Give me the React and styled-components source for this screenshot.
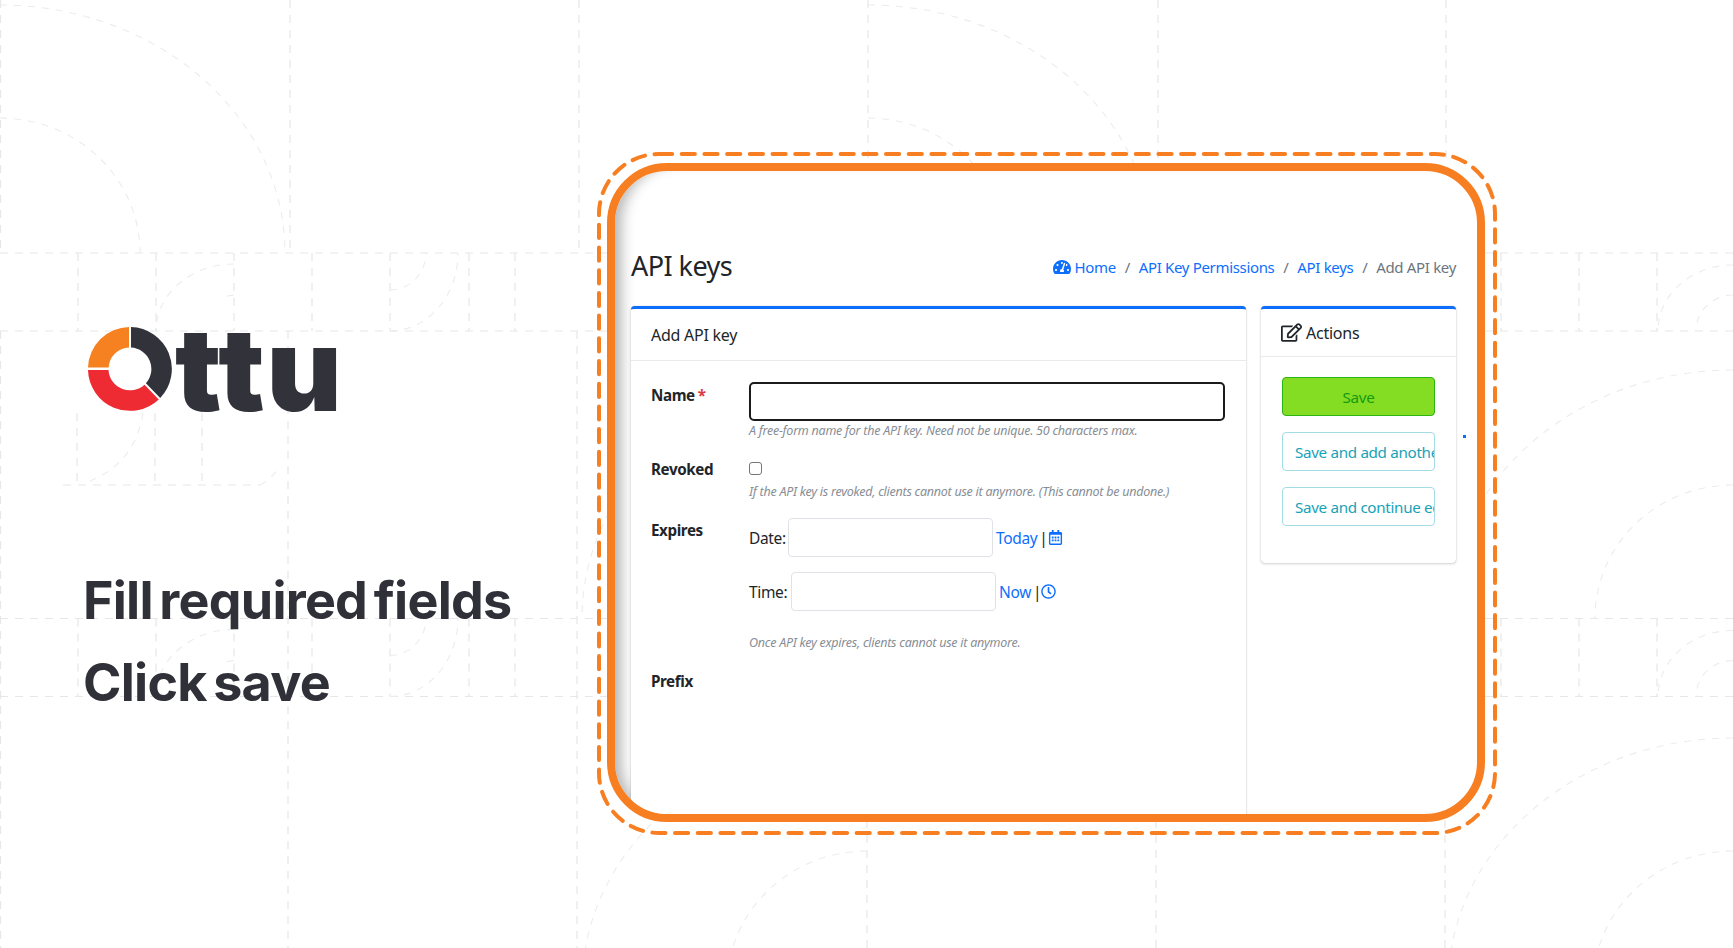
import React from 'react';
import styled, { createGlobalStyle } from 'styled-components';
import { FaTachometerAlt, FaRegEdit, FaRegCalendarAlt, FaRegClock } from 'react-icons/fa';

const GlobalStyle = createGlobalStyle`
	html, body {
		margin: 0;
		padding: 0;
		background: #fff;
	}
	* {
		box-sizing: border-box;
	}
`;

const Page = styled.div`
	position: relative;
	display: flex;
	width: 1733px;
	height: 948px;
	overflow: hidden;
	background: #fff;
	font-family: "Noto Sans", sans-serif;
`;

const Backdrop = styled.svg`
	position: absolute;
	left: 0;
	top: 0;
`;

const LeftColumn = styled.div`
	position: relative;
	flex: 0 0 607px;
	padding: 327px 0 0 88px;
`;

const Logo = styled.div`
	display: flex;
	align-items: flex-end;
	height: 84px;
	gap: 3px;
`;

const LogoText = styled.span`
	font-family: Inter, sans-serif;
	font-weight: 900;
	font-size: 116px;
	line-height: 84px;
	letter-spacing: 2px;
	color: #31323a;
`;

const Steps = styled.div`
	margin: 149px 0 0 -5px;
`;

const Step = styled.div`
	font-family: Inter, sans-serif;
	font-weight: 700;
	font-size: 52px;
	line-height: 81.5px;
	letter-spacing: -0.75px;
	word-spacing: -5px;
	color: #2f3038;
	white-space: nowrap;
`;

const FrameWrap = styled.div`
	position: relative;
	flex: 0 0 878px;
	height: 659px;
	margin-top: 163px;
`;

const DashedOutline = styled.svg`
	position: absolute;
	left: -10px;
	top: -11px;
	overflow: visible;
`;

const Frame = styled.div`
	position: relative;
	width: 100%;
	height: 100%;
	border: 8px solid #f77f22;
	border-radius: 60px;
	background: #fff;
	overflow: hidden;
	box-shadow: inset 16px 0 14px -10px rgba(0, 0, 0, 0.3);
	padding: 74px 21px 0 16px;
`;

const Dot = styled.span`
	position: absolute;
	left: 848px;
	top: 264px;
	width: 3px;
	height: 3px;
	background: #0d6efd;
`;

const HeaderRow = styled.div`
	display: flex;
	justify-content: space-between;
	align-items: center;
	height: 40px;
	margin-bottom: 21px;
`;

const Title = styled.h1`
	margin: 0;
	font-size: 27px;
	font-weight: 400;
	letter-spacing: -0.55px;
	color: #212529;
`;

const Breadcrumb = styled.nav`
	display: flex;
	align-items: center;
	gap: 8.8px;
	margin-top: 4px;
	font-size: 15px;
	letter-spacing: -0.33px;
	color: #6c757d;
`;

const Crumb = styled.a`
	display: inline-flex;
	align-items: center;
	gap: 3px;
	color: #0d6efd;
	text-decoration: none;
`;

const Columns = styled.div`
	display: flex;
	align-items: flex-start;
	gap: 15px;
`;

const Card = styled.section`
	flex: 0 0 ${(p) => p.$width}px;
	height: ${(p) => p.$height}px;
	background: #fff;
	border-top: 3px solid #0d6efd;
	border-radius: 4px;
	box-shadow: 0 0 1px rgba(0, 0, 0, 0.3), 0 1px 3px rgba(0, 0, 0, 0.16);
`;

const CardHeader = styled.div`
	display: flex;
	align-items: center;
	gap: 4px;
	height: ${(p) => p.$height}px;
	padding: 0 20px;
	border-bottom: 1px solid #e8eaec;
	font-size: 16px;
	letter-spacing: -0.25px;
	color: #212529;
`;

const FormBody = styled.div`
	padding: 21px 20px 0;
`;

const Row = styled.div`
	display: flex;
	margin-bottom: ${(p) => p.$gap}px;
`;

const Label = styled.label`
	flex: 0 0 98px;
	padding-top: ${(p) => p.$top}px;
	font-size: 15.2px;
	line-height: 24px;
	font-weight: 700;
	letter-spacing: -0.4px;
	color: #212529;
`;

const Required = styled.span`
	margin-left: 3px;
	color: #dc3545;
`;

const Field = styled.div`
	flex: 1;
	min-width: 0;
`;

const NameInput = styled.input`
	display: block;
	width: 476px;
	height: 39px;
	background: #fff;
	border: 2.5px solid #1b1b1b;
	border-radius: 5px;
	outline: none;
`;

const Help = styled.div`
	margin-top: ${(p) => p.$top}px;
	font-size: 12.5px;
	line-height: 18px;
	font-style: italic;
	letter-spacing: -0.25px;
	color: #878e95;
	white-space: nowrap;
`;

const Checkbox = styled.input`
	display: block;
	appearance: none;
	width: 13px;
	height: 13px;
	margin: 6px 0 0;
	background: #fff;
	border: 1.2px solid #767676;
	border-radius: 3px;
`;

const DateLine = styled.div`
	display: flex;
	align-items: center;
	height: 39px;
	margin-top: ${(p) => p.$top}px;
	font-size: 15.5px;
	letter-spacing: -0.35px;
	color: #212529;
`;

const DateLabel = styled.span`
	flex: 0 0 ${(p) => p.$width}px;
`;

const DateInput = styled.input`
	width: 205px;
	height: 39px;
	margin-right: 3px;
	background: #fff;
	border: 1px solid #dfe3e7;
	border-radius: 4px;
	outline: none;
`;

const Shortcut = styled.a`
	color: #0d6efd;
	text-decoration: none;
`;

const Pipe = styled.span`
	margin: 0 0 0 2px;
	color: #212529;
`;

const ShortcutIcon = styled.span`
	display: inline-flex;
	color: #0d6efd;
	font-size: 15px;
`;

const ActionsBody = styled.div`
	display: flex;
	flex-direction: column;
	gap: 16px;
	padding: 20px 21px 0;
`;

const ActionButton = styled.button`
	display: block;
	width: 153px;
	height: 39px;
	padding: ${(p) => (p.$primary ? '0' : '0 0 0 12px')};
	overflow: hidden;
	white-space: nowrap;
	text-align: ${(p) => (p.$primary ? 'center' : 'left')};
	font-family: inherit;
	font-size: 15.2px;
	letter-spacing: -0.32px;
	border-radius: 4px;
	border: 1.5px solid ${(p) => (p.$primary ? '#2eb315' : '#a3dce4')};
	background: ${(p) => (p.$primary ? '#84dc23' : '#fff')};
	color: ${(p) => (p.$primary ? '#149a10' : '#17a2b8')};
`;

// dashed guide pattern behind everything, traced from the reference
const GUIDE_BANDS = [0, 365.5];
const LEFT_BAND_X = [78, 156, 234, 312, 390, 469, 515];
const RIGHT_BAND_X = [1501, 1579, 1657];

const quarter = (cx, cy, rx, ry, dirX, dirY) =>
	`M${cx} ${cy + dirY * ry} A${rx} ${ry} 0 0 ${dirX * dirY > 0 ? 0 : 1} ${cx + dirX * rx} ${cy}`;

function Guides() {
	return (
		<Backdrop width="1733" height="948" viewBox="0 0 1733 948" fill="none">
			<g stroke="#e7e7e7" strokeWidth="1.2" strokeDasharray="8 7">
				{GUIDE_BANDS.map((dy) => (
					<g key={dy}>
						<path d={`M0 ${253 + dy}H1733M0 ${331 + dy}H1733`} />
						{[...LEFT_BAND_X, ...RIGHT_BAND_X].map((x) => (
							<path key={x} d={`M${x} ${253 + dy}V${331 + dy}`} />
						))}
					</g>
				))}
				<path d="M290 0V253M579 0V253M868 0V160M1158 0V160M1446 0V160" />
				<path d="M288 331V948M577 331V948M867 820V948M1156 820V948M1445 820V948" />
				<path d="M0.5 0V253M0.5 331V948" />
				<path d="M77 413V485M155 413V485M202 413V485M63 485H260" />
			</g>
			<g stroke="#ececec" strokeWidth="1.1" strokeDasharray="7 7">
				<path d={quarter(0, 253, 140, 135, 1, -1)} />
				<path d={quarter(0, 253, 285, 248, 1, -1)} />
				<path d={quarter(868, 253, 140, 135, 1, -1)} />
				<path d={quarter(868, 253, 285, 248, 1, -1)} />
				<path d={quarter(867, 618, 285, 248, -1, -1)} />
				<path d={quarter(867, 986, 140, 135, -1, -1)} />
				<path d={quarter(867, 986, 285, 248, -1, -1)} />
				<path d={quarter(1733, 618, 138, 133, -1, -1)} />
				<path d={quarter(1733, 618, 285, 248, -1, -1)} />
				<path d={quarter(1733, 986, 140, 135, -1, -1)} />
				<path d={quarter(1733, 986, 285, 248, -1, -1)} />
				<path d="M143 413Q135 465 85 483M260 485Q270 480 277 470" />
				{GUIDE_BANDS.map((dy) => (
					<g key={dy}>
						<path d={quarter(234, 331 + dy, 78, 67, -1, -1)} />
						<path d={`M234 ${295 + dy}L222 ${297 + dy}`} />
						<path d={quarter(390, 253 + dy, 36, 37, 1, 1)} />
						<path d={quarter(390, 253 + dy, 68, 78, 1, 1)} />
						<path d={quarter(1733, 331 + dy, 75, 66, -1, -1)} />
						<path d={quarter(1733, 331 + dy, 37, 36, -1, -1)} />
					</g>
				))}
			</g>
		</Backdrop>
	);
}

function OttuMark() {
	return (
		<svg width="84" height="84" viewBox="0 0 84 84">
			<path fill="#f68121" d="M41 0A42 42 0 0 0 0 40.5H20.6A21.5 21.5 0 0 1 41 20.5Z" />
			<path fill="#31323a" d="M43 0A42 42 0 0 1 72.2 71L57.9 56.3A21.5 21.5 0 0 0 43 20.5Z" />
			<path fill="#ee2a33" d="M0 43A42 42 0 0 0 70.8 72.4L56.5 57.7A21.5 21.5 0 0 1 20.5 43Z" />
		</svg>
	);
}

export default function App() {
	return (
		<Page>
			<GlobalStyle />
			<Guides />
			<LeftColumn>
				<Logo>
					<OttuMark />
					<LogoText>ttu</LogoText>
				</Logo>
				<Steps>
					<Step>Fill required fields</Step>
					<Step>Click save</Step>
				</Steps>
			</LeftColumn>
			<FrameWrap>
				<DashedOutline width="896" height="679" fill="none">
					<rect
						x="2"
						y="2"
						width="896"
						height="679"
						rx="60"
						stroke="#f77f22"
						strokeWidth="4"
						strokeLinecap="round"
						strokeDasharray="13.2 9.5"
					/>
				</DashedOutline>
				<Frame>
					<Dot />
					<HeaderRow>
						<Title>API keys</Title>
						<Breadcrumb>
							<Crumb href="#">
								<FaTachometerAlt size={18} />
								Home
							</Crumb>
							<span>/</span>
							<Crumb href="#">API Key Permissions</Crumb>
							<span>/</span>
							<Crumb href="#">API keys</Crumb>
							<span>/</span>
							<span>Add API key</span>
						</Breadcrumb>
					</HeaderRow>
					<Columns>
						<Card $width={615} $height={620}>
							<CardHeader $height={52}>Add API key</CardHeader>
							<FormBody>
								<Row $gap={16}>
									<Label $top={1}>
										Name<Required>*</Required>
									</Label>
									<Field>
										<NameInput type="text" />
										<Help $top={1}>A free-form name for the API key. Need not be unique. 50 characters max.</Help>
									</Field>
								</Row>
								<Row $gap={17}>
									<Label $top={1}>Revoked</Label>
									<Field>
										<Checkbox type="checkbox" />
										<Help $top={8}>If the API key is revoked, clients cannot use it anymore. (This cannot be undone.)</Help>
									</Field>
								</Row>
								<Row $gap={17}>
									<Label $top={0}>Expires</Label>
									<Field>
										<DateLine $top={0}>
											<DateLabel $width={39}>Date:</DateLabel>
											<DateInput type="text" />
											<Shortcut href="#">Today</Shortcut>
											<Pipe>|</Pipe>
											<ShortcutIcon>
												<FaRegCalendarAlt />
											</ShortcutIcon>
										</DateLine>
										<DateLine $top={15}>
											<DateLabel $width={42}>Time:</DateLabel>
											<DateInput type="text" />
											<Shortcut href="#">Now</Shortcut>
											<Pipe>|</Pipe>
											<ShortcutIcon>
												<FaRegClock />
											</ShortcutIcon>
										</DateLine>
										<Help $top={23}>Once API key expires, clients cannot use it anymore.</Help>
									</Field>
								</Row>
								<Row $gap={0}>
									<Label $top={0}>Prefix</Label>
								</Row>
							</FormBody>
						</Card>
						<Card $width={195} $height={257}>
							<CardHeader $height={48}>
								<FaRegEdit size={21} />
								Actions
							</CardHeader>
							<ActionsBody>
								<ActionButton $primary>Save</ActionButton>
								<ActionButton>Save and add another</ActionButton>
								<ActionButton>Save and continue editing</ActionButton>
							</ActionsBody>
						</Card>
					</Columns>
				</Frame>
			</FrameWrap>
		</Page>
	);
}
